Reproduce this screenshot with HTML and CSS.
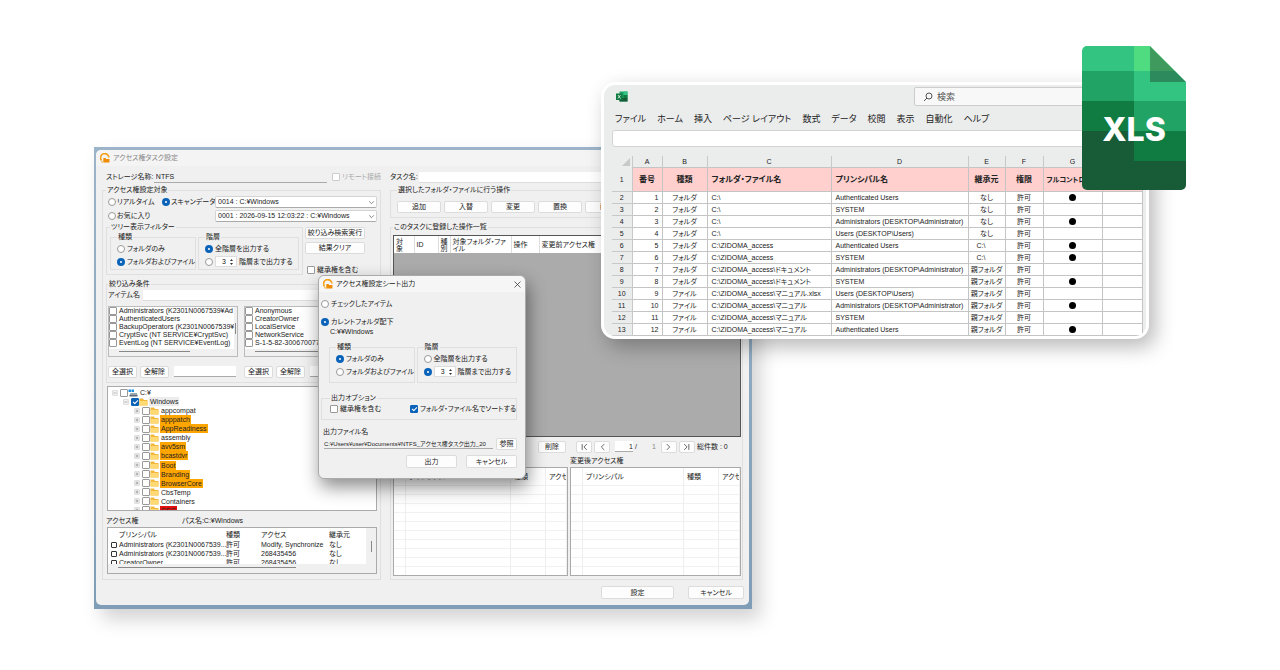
FILE: index.html
```html
<!DOCTYPE html>
<html lang="ja">
<head>
<meta charset="utf-8">
<title>アクセス権タスク設定</title>
<link rel="stylesheet" href="styles.css">
</head>
<body>
<svg class="defs" aria-hidden="true">
  <symbol id="app" viewBox="0 0 18 18"><path d="M2.500 13A7.500 7.500 0 1 1 16 8" fill="none" stroke="#f5a11c" stroke-width="3"/><path d="M6 9h4l1 2h6v6H6z" fill="#f08c00"/><path d="M2 12l4 5H3z" fill="#f5a11c"/></symbol>
  <symbol id="folder" viewBox="0 0 18 16"><path d="M1 1h7l2 3h7v11H1z" fill="#f3b73b"/><path d="M1 6h16v9H1z" fill="#ffda74"/></symbol>
  <symbol id="plus" viewBox="0 0 12 12"><path d="M1.500 1.500h9v9h-9z" fill="#fff" stroke="#aaa"/><path d="M3 6h6M6 3v6" stroke="#555"/></symbol>
  <symbol id="minus" viewBox="0 0 12 12"><path d="M1.500 1.500h9v9h-9z" fill="#fff" stroke="#aaa"/><path d="M3 6h6" stroke="#555"/></symbol>
  <symbol id="drive" viewBox="0 0 20 16"><path d="M1 1h5v5H1zM7 1h5v5H7z" fill="#1c8fe0"/><path d="M5 8h13l1 5H3z" fill="#9aa7b1"/><path d="M3 12h16v3H3z" fill="#5d6b76"/></symbol>
  <symbol id="chev" viewBox="0 0 12 12"><path d="M2 4l4 4 4-4" fill="none" stroke="#777" stroke-width="1.500"/></symbol>
  <symbol id="spin" viewBox="0 0 10 16"><path d="M5 2l3 4H2zM5 14l3-4H2z" fill="#333"/></symbol>
</svg>
<main class="stage">

<section class="frame">
<div class="window">
  <header class="titlebar"><svg class="appicon"><use href="#app"/></svg><span>アクセス権タスク設定</span></header>
  <div class="columns">
    <div class="left">
      <div class="toprow">
        <label class="storage" for="storage">ストレージ名称:</label>
        <input class="line storage-input" id="storage" value="NTFS">
        <label class="check dim"><input type="checkbox" disabled>リモート接続</label>
      </div>
      <fieldset class="target">
        <legend>アクセス権設定対象</legend>
        <div class="sources">
          <label class="check"><input type="radio" name="src">リアルタイム</label>
          <label class="check"><input type="radio" name="src" checked>スキャンデータ</label>
          <span class="select"><select aria-label="スキャンデータ"><option>0014 : C:¥Windows</option></select><svg><use href="#chev"/></svg></span>
          <label class="check fav"><input type="radio" name="src">お気に入り</label>
          <span class="select"><select aria-label="お気に入り"><option>0001 : 2026-09-15 12:03:22 : C:¥Windows</option></select><svg><use href="#chev"/></svg></span>
        </div>
        <div class="filter">
          <fieldset class="treefilter">
            <legend>ツリー表示フィルター</legend>
            <div class="pair">
              <fieldset class="kind"><legend>種類</legend>
                <label class="check"><input type="radio" name="k1">フォルダのみ</label>
                <label class="check"><input type="radio" name="k1" checked>フォルダおよびファイル</label>
              </fieldset>
              <fieldset class="depth"><legend>階層</legend>
                <label class="check"><input type="radio" name="d1" checked>全階層を出力する</label>
                <div class="check"><input type="radio" name="d1" aria-label="階層まで出力する"><span class="spin"><input type="text" value="3" aria-label="階層数"><svg><use href="#spin"/></svg></span><span>階層まで出力する</span></div>
              </fieldset>
            </div>
          </fieldset>
          <div class="actions">
            <button>絞り込み検索実行</button>
            <button>結果クリア</button>
            <label class="check"><input type="checkbox">継承権を含む</label>
          </div>
        </div>
        <fieldset class="conditions">
          <legend>絞り込み条件</legend>
          <div class="item"><label for="item">アイテム名</label><input class="line" id="item"></div>
          <div class="lists">
            <div class="list">
              <div class="rows">
                <label class="check"><input type="checkbox">Administrators (K2301N0067539¥Ad</label>
                <label class="check"><input type="checkbox">AuthenticatedUsers</label>
                <label class="check"><input type="checkbox">BackupOperators (K2301N0067539¥B</label>
                <label class="check"><input type="checkbox">CryptSvc (NT SERVICE¥CryptSvc)</label>
                <label class="check"><input type="checkbox">EventLog (NT SERVICE¥EventLog)</label>
              </div>
              <i class="vbar"></i><i class="hbar"></i>
            </div>
            <div class="list">
              <div class="rows">
                <label class="check"><input type="checkbox">Anonymous</label>
                <label class="check"><input type="checkbox">CreatorOwner</label>
                <label class="check"><input type="checkbox">LocalService</label>
                <label class="check"><input type="checkbox">NetworkService</label>
                <label class="check"><input type="checkbox">S-1-5-82-3006700770</label>
              </div>
              <i class="vbar"></i><i class="hbar"></i>
            </div>
            <div class="picks"><button>全選択</button><button>全解除</button><input class="line" aria-label="検索"></div>
            <div class="picks"><button>全選択</button><button>全解除</button><input class="line" aria-label="検索"></div>
          </div>
        </fieldset>
        <div class="tree">
          <div class="node"><svg class="ex"><use href="#minus"/></svg><input type="checkbox" aria-label="C:¥"><svg class="drive"><use href="#drive"/></svg><span>C:¥</span></div>
          <div class="node l1"><svg class="ex"><use href="#minus"/></svg><input type="checkbox" checked aria-label="Windows"><svg class="fo"><use href="#folder"/></svg><span class="sel">Windows</span></div>
          <div class="node l2"><svg class="ex"><use href="#plus"/></svg><input type="checkbox" aria-label="appcompat"><svg class="fo"><use href="#folder"/></svg><span>appcompat</span></div>
          <div class="node l2"><svg class="ex"><use href="#plus"/></svg><input type="checkbox" aria-label="apppatch"><svg class="fo"><use href="#folder"/></svg><span class="hot">apppatch</span></div>
          <div class="node l2"><svg class="ex"><use href="#plus"/></svg><input type="checkbox" aria-label="AppReadiness"><svg class="fo"><use href="#folder"/></svg><span class="hot">AppReadiness</span></div>
          <div class="node l2"><svg class="ex"><use href="#plus"/></svg><input type="checkbox" aria-label="assembly"><svg class="fo"><use href="#folder"/></svg><span>assembly</span></div>
          <div class="node l2"><svg class="ex"><use href="#plus"/></svg><input type="checkbox" aria-label="avv5sm"><svg class="fo"><use href="#folder"/></svg><span class="hot">avv5sm</span></div>
          <div class="node l2"><svg class="ex"><use href="#plus"/></svg><input type="checkbox" aria-label="bcastdvr"><svg class="fo"><use href="#folder"/></svg><span class="hot">bcastdvr</span></div>
          <div class="node l2"><svg class="ex"><use href="#plus"/></svg><input type="checkbox" aria-label="Boot"><svg class="fo"><use href="#folder"/></svg><span class="hot">Boot</span></div>
          <div class="node l2"><svg class="ex"><use href="#plus"/></svg><input type="checkbox" aria-label="Branding"><svg class="fo"><use href="#folder"/></svg><span class="hot">Branding</span></div>
          <div class="node l2"><svg class="ex"><use href="#plus"/></svg><input type="checkbox" aria-label="BrowserCore"><svg class="fo"><use href="#folder"/></svg><span class="hot">BrowserCore</span></div>
          <div class="node l2"><svg class="ex"><use href="#plus"/></svg><input type="checkbox" aria-label="CbsTemp"><svg class="fo"><use href="#folder"/></svg><span>CbsTemp</span></div>
          <div class="node l2"><svg class="ex"><use href="#plus"/></svg><input type="checkbox" aria-label="Containers"><svg class="fo"><use href="#folder"/></svg><span>Containers</span></div>
          <div class="node l2 cut"><svg class="ex"><use href="#plus"/></svg><input type="checkbox" aria-label="CSC"><svg class="fo"><use href="#folder"/></svg><span class="red">CSC</span></div>
        </div>
        <div class="path"><span>アクセス権</span><span>パス名:C:¥Windows</span></div>
        <div class="acl">
          <div class="aclrows">
          <table>
            <colgroup><col class="a1"><col class="a2"><col class="a3"><col class="a4"><col></colgroup>
            <thead><tr><th></th><th>プリンシパル</th><th>種類</th><th>アクセス</th><th>継承元</th></tr></thead>
            <tbody>
            <tr><td><input type="checkbox" aria-label="行1"></td><td>Administrators (K2301N0067539...</td><td>許可</td><td>Modify, Synchronize</td><td>なし</td></tr>
            <tr><td><input type="checkbox" aria-label="行2"></td><td>Administrators (K2301N0067539...</td><td>許可</td><td>268435456</td><td>なし</td></tr>
            <tr><td><input type="checkbox" aria-label="行3"></td><td>CreatorOwner</td><td>許可</td><td>268435456</td><td>なし</td></tr>
            </tbody>
          </table>
          </div>
          <i class="vbar"></i><i class="hbar"></i>
        </div>
      </fieldset>
    </div>
    <div class="right">
      <div class="toprow"><label class="task" for="task">タスク名:</label><input class="line" id="task"></div>
      <fieldset class="ops">
        <legend>選択したフォルダ・ファイルに行う操作</legend>
        <div class="opbuttons"><button>追加</button><button>入替</button><button>変更</button><button>置換</button><button>削除</button></div>
      </fieldset>
      <fieldset class="registered">
        <legend>このタスクに登録した操作一覧</legend>
        <div class="taskgrid">
          <table>
            <colgroup><col class="t1"><col class="t2"><col class="t3"><col class="t4"><col class="t5"><col></colgroup>
            <thead><tr><th>対<br>象</th><th>ID</th><th>種<br>別</th><th>対象フォルダ・ファイル</th><th>操作</th><th>変更前アクセス権</th></tr></thead>
          </table>
        </div>
        <div class="pager">
          <button class="del">削除</button>
          <button aria-label="最初"><svg viewBox="0 0 12 12"><path d="M2 1v10M10 1L5 6l5 5"/></svg></button>
          <button aria-label="前"><svg viewBox="0 0 12 12"><path d="M9 1L4 6l5 5"/></svg></button>
          <input class="line" value="1" aria-label="ページ"><span>/</span><span class="total">1</span>
          <button aria-label="次"><svg viewBox="0 0 12 12"><path d="M3 1l5 5-5 5"/></svg></button>
          <button aria-label="最後"><svg viewBox="0 0 12 12"><path d="M2 1l5 5-5 5M10 1v10"/></svg></button>
          <span>総件数 : 0</span>
        </div>
        <div class="compare">
          <span>変更前アクセス権</span><span>変更後アクセス権</span>
          <div class="rights"><div></div><div>プリンシパル</div><div>種類</div><div>アクセス</div></div>
          <div class="rights"><div></div><div>プリンシパル</div><div>種類</div><div>アクセス</div></div>
        </div>
      </fieldset>
    </div>
  </div>
  <footer class="footer"><button class="ok">設定</button><button>キャンセル</button></footer>
</div>
</section>

<section class="dialog" role="dialog" aria-label="アクセス権設定シート出力">
  <header class="titlebar"><svg class="appicon"><use href="#app"/></svg><span>アクセス権設定シート出力</span><button class="close" aria-label="閉じる"><svg viewBox="0 0 14 14"><path d="M1 1l12 12M13 1L1 13"/></svg></button></header>
  <label class="check checked-items"><input type="radio" name="scope">チェックしたアイテム</label>
  <label class="check"><input type="radio" name="scope" checked>カレントフォルダ配下</label>
  <div class="current">C:¥¥Windows</div>
  <div class="pair">
    <fieldset class="kind"><legend>種類</legend>
      <label class="check"><input type="radio" name="k2" checked>フォルダのみ</label>
      <label class="check"><input type="radio" name="k2">フォルダおよびファイル</label>
    </fieldset>
    <fieldset class="depth"><legend>階層</legend>
      <label class="check"><input type="radio" name="d2">全階層を出力する</label>
      <div class="check"><input type="radio" name="d2" checked aria-label="階層まで出力する"><span class="spin"><input type="text" value="3" aria-label="階層数"><svg><use href="#spin"/></svg></span><span>階層まで出力する</span></div>
    </fieldset>
  </div>
  <fieldset class="options"><legend>出力オプション</legend>
    <label class="check"><input type="checkbox">継承権を含む</label>
    <label class="check"><input type="checkbox" checked>フォルダ・ファイル名でソートする</label>
  </fieldset>
  <label class="outlabel" for="out">出力ファイル名</label>
  <div class="outrow"><input class="line" id="out" value="C:¥Users¥user¥Documents¥NTFS_アクセス権タスク出力_20"><button>参照</button></div>
  <div class="dlgbuttons"><button>出力</button><button>キャンセル</button></div>
</section>

<section class="sheet">
  <header class="sheettop">
    <svg class="xl" viewBox="0 0 24 22"><path d="M7 1h16v20H7z" fill="#21a366"/><path d="M15 1h8v7h-8z" fill="#33c481"/><path d="M7 14h16v7H7z" fill="#185c37"/><path d="M15 8h8v6h-8z" fill="#107c41"/><path d="M0 5h13v13H0z" fill="#107c41"/><path d="M4 8l5 7M9 8l-5 7" stroke="#fff" stroke-width="1.500"/></svg>
    <div class="search"><svg viewBox="0 0 20 20"><circle cx="12" cy="8" r="6"/><path d="M8 12l-6 6"/></svg><input aria-label="検索" placeholder="検索"></div>
  </header>
  <nav class="menu"><a href="#">ファイル</a><a href="#">ホーム</a><a href="#">挿入</a><a href="#">ページ レイアウト</a><a href="#">数式</a><a href="#">データ</a><a href="#">校閲</a><a href="#">表示</a><a href="#">自動化</a><a href="#">ヘルプ</a></nav>
  <div class="ribbon"></div>
  <table class="cells">
    <colgroup><col class="n"><col class="ca"><col class="cb"><col class="cc"><col class="cd"><col class="ce"><col class="cf"><col class="cg"><col></colgroup>
    <thead><tr><th><svg class="corner" viewBox="0 0 8 8"><path d="M8 0v8H0z"/></svg></th><th>A</th><th>B</th><th>C</th><th>D</th><th>E</th><th>F</th><th>G</th><th></th></tr></thead>
    <tbody>
      <tr class="head"><th>1</th><td>番号</td><td>種類</td><td>フォルダ・ファイル名</td><td>プリンシパル名</td><td>継承元</td><td>権限</td><td>フルコントロール</td><td></td></tr>
      <tr><th>2</th><td>1</td><td>フォルダ</td><td>C:\</td><td>Authenticated Users</td><td>なし</td><td>許可</td><td><i class="dot"></i></td><td></td></tr>
      <tr><th>3</th><td>2</td><td>フォルダ</td><td>C:\</td><td>SYSTEM</td><td>なし</td><td>許可</td><td></td><td></td></tr>
      <tr><th>4</th><td>3</td><td>フォルダ</td><td>C:\</td><td>Administrators (DESKTOP\Administrator)</td><td>なし</td><td>許可</td><td><i class="dot"></i></td><td></td></tr>
      <tr><th>5</th><td>4</td><td>フォルダ</td><td>C:\</td><td>Users (DESKTOP\Users)</td><td>なし</td><td>許可</td><td></td><td></td></tr>
      <tr><th>6</th><td>5</td><td>フォルダ</td><td>C:\ZIDOMA_access</td><td>Authenticated Users</td><td class="drv">C:\</td><td>許可</td><td><i class="dot"></i></td><td></td></tr>
      <tr><th>7</th><td>6</td><td>フォルダ</td><td>C:\ZIDOMA_access</td><td>SYSTEM</td><td class="drv">C:\</td><td>許可</td><td><i class="dot"></i></td><td></td></tr>
      <tr><th>8</th><td>7</td><td>フォルダ</td><td>C:\ZIDOMA_access\ドキュメント</td><td>Administrators (DESKTOP\Administrator)</td><td>親フォルダ</td><td>許可</td><td></td><td></td></tr>
      <tr><th>9</th><td>8</td><td>フォルダ</td><td>C:\ZIDOMA_access\ドキュメント</td><td>SYSTEM</td><td>親フォルダ</td><td>許可</td><td><i class="dot"></i></td><td></td></tr>
      <tr><th>10</th><td>9</td><td>ファイル</td><td>C:\ZIDOMA_access\マニュアル.xlsx</td><td>Users (DESKTOP\Users)</td><td>親フォルダ</td><td>許可</td><td></td><td></td></tr>
      <tr><th>11</th><td>10</td><td>ファイル</td><td>C:\ZIDOMA_access\マニュアル</td><td>Administrators (DESKTOP\Administrator)</td><td>親フォルダ</td><td>許可</td><td><i class="dot"></i></td><td></td></tr>
      <tr><th>12</th><td>11</td><td>ファイル</td><td>C:\ZIDOMA_access\マニュアル</td><td>SYSTEM</td><td>親フォルダ</td><td>許可</td><td></td><td></td></tr>
      <tr><th>13</th><td>12</td><td>ファイル</td><td>C:\ZIDOMA_access\マニュアル</td><td>Authenticated Users</td><td>親フォルダ</td><td>許可</td><td><i class="dot"></i></td><td></td></tr>
    </tbody>
  </table>
</section>

<div class="badge">
  <svg viewBox="0 0 104 144" aria-hidden="true">
    <clipPath id="page"><path d="M5 0H68L104 36V139a5 5 0 0 1-5 5H5a5 5 0 0 1-5-5V5a5 5 0 0 1 5-5z"/></clipPath>
    <g clip-path="url(#page)">
      <path d="M0 0h52v25H0z" fill="#33c481"/><path d="M0 25h52v30H0z" fill="#21a366"/><path d="M0 55h52v30H0z" fill="#107c41"/><path d="M0 85h52v59H0z" fill="#185c37"/>
      <path d="M52 0h52v25H52z" fill="#4fdc80"/><path d="M52 25h52v30H52z" fill="#33c481"/><path d="M52 55h52v30H52z" fill="#21a366"/><path d="M52 85h52v30H52z" fill="#107c41"/><path d="M52 115h52v29H52z" fill="#185c37"/>
      <path d="M68 0L93 25H68z" fill="#3f9a5e"/><path d="M68 25h25l11 11H68z" fill="#2d8a5c"/>
    </g>
  </svg>
  <strong>XLS</strong>
</div>
</main>
</body>
</html>
```
FILE: styles.css
```css
* { box-sizing: border-box; }
body { margin: 0; background: #fff; color: #222; font: 7px/10px "Liberation Sans", "Noto Sans CJK JP", sans-serif; font-feature-settings: "palt"; }
.defs { position: absolute; width: 0; height: 0; }
.stage { position: relative; min-height: 670px; overflow: hidden; }
svg { display: block; flex: none; }
button, input, select { font: inherit; font-feature-settings: inherit; color: inherit; margin: 0; padding: 0; min-width: 0; }
button { background: #fdfdfd; border: 1px solid #dcdcdc; border-radius: 2px; height: 12px; line-height: 10px; white-space: nowrap; }
fieldset { margin: 0; padding: 0; border: 1px solid #dfdfdf; min-width: 0; }
legend { padding: 0 1px; line-height: 10px; white-space: nowrap; }
table { border-collapse: collapse; table-layout: fixed; width: 100%; }
th, td { padding: 0; font-weight: normal; text-align: left; overflow: hidden; white-space: nowrap; }

input[type=radio], input[type=checkbox] { appearance: none; flex: none; width: 8px; height: 8px; border: 1px solid #999; background: #fff; }
input[type=radio] { border-radius: 50%; }
input[type=checkbox] { border-radius: 1px; }
input[type=radio]:checked { border: 3px solid #0a63b8; }
input[type=checkbox]:checked { border-color: #0a63b8; background: #0a63b8; }
input[type=checkbox]:checked::after { content: ""; display: block; width: 4px; height: 2px; margin: 1px; border: solid #fff; border-width: 0 0 1px 1px; transform: rotate(-45deg); }
.check { display: flex; align-items: center; gap: 2px; white-space: nowrap; }
.dim { color: #aaa; }
.dim input[type=checkbox] { border-color: #ccc; }
.line { border: 0; border-bottom: 1px solid #aaa; background: #fff; height: 11px; }
.spin { display: flex; align-items: center; justify-content: space-between; width: 22px; height: 11px; padding-right: 2px; border: 1px solid #ddd; background: #fff; }
.spin input { width: 10px; height: 9px; border: 0; background: none; text-align: right; }
.spin svg { width: 5px; height: 8px; }
.appicon { width: 10px; height: 10px; }
.titlebar { display: flex; align-items: center; gap: 3px; height: 16px; padding-left: 4px; }

/* main window */
.frame { position: absolute; left: 94px; top: 147px; width: 658px; padding: 3px 3px 4px 2px; background: linear-gradient(#9bb4c9, #7f9db6); box-shadow: 8px 10px 18px rgba(0, 0, 0, .18); }
.window { background: #f0f0f0; border-radius: 5px; padding-bottom: 6px; }
.window > .titlebar { color: #888; background: #f4f4f4; border-radius: 5px 5px 0 0; }
.columns { display: grid; grid-template-columns: 279px 1fr; gap: 9px; padding: 5px 6px 0; }
.left, .right { min-width: 0; display: flex; flex-direction: column; }
.toprow { display: flex; align-items: center; height: 12px; margin-bottom: 2px; }
.storage { width: 52px; padding-left: 4px; }
.storage-input { width: 174px; margin-right: 5px; background: #f0f0f0; padding-left: 2px; }
.task { width: 29px; }
.toprow .task + .line { flex: 1; border-color: #ddd; }
.target { flex: 1; padding: 0 3px 3px; }
.sources { display: grid; grid-template-columns: 54px 53px 1fr; row-gap: 2px; padding: 1px 0 0 2px; align-items: center; }
.sources .check { gap: 1px; }
.fav { grid-column: span 2; }
.select { display: grid; align-items: center; }
.select > * { grid-area: 1 / 1; }
.select select { appearance: none; width: 100%; height: 12px; line-height: 10px; padding: 0 2px; border: 1px solid #d4d4d4; border-bottom-color: #aaa; border-radius: 2px; background: #fff; }
.select svg { width: 7px; height: 7px; justify-self: end; margin-right: 2px; pointer-events: none; }
.filter { display: flex; gap: 2px; }
.treefilter { width: 197px; padding: 0 3px 4px; }
.pair { display: flex; gap: 2px; }
.kind { width: 86px; }
.depth { width: 101px; }
.kind, .depth { padding: 0 0 1px 6px; }
.kind .check, .depth .check { height: 13px; }
.actions { display: flex; flex-direction: column; gap: 3px; padding-top: 5px; width: 60px; }
.actions .check { margin: 8px 0 0 2px; }
.conditions { padding: 0 3px 4px 1px; margin-top: 4px; }
.item { display: flex; height: 12px; align-items: center; margin-bottom: 5px; }
.item label { width: 35px; }
.item .line { flex: 1; border-color: #ddd; }
.lists { display: grid; grid-template-columns: 130px 130px; gap: 9px 6px; }
.list { display: grid; grid-template-columns: 1fr 3px; grid-template-rows: 42px 7px; border: 1px solid #bbb; background: #f0f0f0; }
.rows { background: #fff; overflow: hidden; }
.rows .check { height: 8px; line-height: 8px; }
.vbar { width: 1px; height: 11px; background: #888; align-self: center; justify-self: center; }
.hbar { width: 71px; height: 1px; margin: 2px 0 0 10px; background: #888; }
.picks { display: flex; gap: 3px; padding: 0 2px 0 0; }
.picks button { width: 29px; }
.picks .line { width: 0; flex: 1; margin-left: 2px; }
.tree { display: flex; flex-direction: column; justify-content: space-between; height: 125px; margin: 3px 0 5px 1px; padding: 1px 4px 0; border: 1px solid #aaa; background: #fff; overflow: hidden; }
.node { display: flex; align-items: center; height: 9px; line-height: 9px; }
.node .ex { width: 6px; height: 6px; margin-right: 2px; }
.node .fo { width: 9px; height: 8px; margin-right: 1px; }
.node .drive { width: 10px; height: 8px; margin-right: 1px; }
.node span { padding: 0 1px; }
.l1 { padding-left: 11px; }
.l2 { padding-left: 22px; }
.cut { margin-bottom: -5px; }
.hot { background: #ffa500; }
.red { background: #e01010; }
.sel { background: #ececec; }
.path { display: grid; grid-template-columns: 76px 1fr; margin-bottom: 1px; }
.acl { display: grid; grid-template-columns: 1fr 10px; grid-template-rows: 36px 9px; margin-left: 1px; border: 1px solid #aaa; background: #f0f0f0; }
.aclrows { overflow: hidden; background: #fff; }
.acl tr { height: 9px; line-height: 9px; }
.acl thead tr { height: 12px; }
.acl td input[type=checkbox] { display: block; width: 6px; height: 6px; margin-left: 3px; border-color: #333; }
.acl .hbar { width: 178px; margin-top: 3px; }
.a1 { width: 11px; } .a2 { width: 107px; } .a3 { width: 35px; } .a4 { width: 68px; }
.ops { padding: 0 0 4px 6px; }
.opbuttons { display: flex; gap: 3px; overflow: hidden; padding-top: 6px; }
.opbuttons button { flex: 0 0 44px; }
.registered { flex: 1; display: flex; flex-direction: column; margin-top: 4px; padding: 0 1px 3px 2px; }
.taskgrid { height: 202px; margin-top: 3px; border: 1px solid #555; background: #ababab; }
.taskgrid tr { height: 17px; background: #fff; line-height: 7px; }
.taskgrid th { border-right: 1px solid #ddd; padding-left: 2px; white-space: normal; }
.t1 { width: 20px; } .t2 { width: 24px; } .t3 { width: 12px; } .t4 { width: 61px; } .t5 { width: 28px; }
.pager { display: flex; align-items: center; gap: 2px; height: 19px; padding-left: 145px; }
.pager button { width: 16px; display: grid; place-items: center; }
.pager .del { width: 28px; margin-right: 8px; }
.pager .line { width: 18px; text-align: right; margin-left: 3px; }
.pager .total { width: 17px; text-align: right; color: #888; margin-right: 3px; }
.pager svg { width: 7px; height: 8px; fill: none; stroke: #555; stroke-width: 1.5; }
.compare { display: grid; grid-template-columns: 175px 1fr; grid-template-rows: 10px 109px; gap: 1px 2px; }
.rights { display: grid; grid-template-columns: 12px 1fr 35px 21px; border: 1px solid #aaa; overflow: hidden; background: repeating-linear-gradient(#fff 0 8px, #f1f1f1 8px 9px); }
.rights div { padding: 4px 0 0 3px; border-right: 1px solid #eee; overflow: hidden; white-space: nowrap; background: linear-gradient(#fff 0 17px, transparent 17px); }
.footer { display: flex; justify-content: flex-end; gap: 14px; margin-top: 6px; padding-right: 5px; }
.footer button { width: 56px; height: 13px; }
.footer .ok { width: 73px; }

/* output dialog */
.dialog { position: absolute; left: 318px; top: 275px; width: 208px; padding: 0 8px 10px 2px; border: 1px solid #aaa; border-radius: 6px; background: #f0f0f0; box-shadow: 2px 8px 18px rgba(0, 0, 0, .45); }
.dialog .titlebar { margin: 0 -8px 0 -2px; border-radius: 6px 6px 0 0; background: #f6f6f6; }
.close { margin-left: auto; width: 16px; border: 0; background: none; display: grid; place-items: center; }
.close svg { width: 7px; height: 7px; fill: none; stroke: #333; stroke-width: 1.5; }
.dialog > .check { height: 10px; }
.dialog > .checked-items { margin: 7px 0 8px; }
.current { padding-left: 9px; }
.dialog .pair { padding-left: 8px; margin-top: 5px; }
.dialog .kind, .dialog .depth { padding-bottom: 4px; }
.options { display: grid; grid-template-columns: 80px 1fr; padding: 1px 0 5px 8px; margin-top: 10px; }
.outlabel { display: block; margin: 7px 0 1px 2px; }
.outrow { display: flex; gap: 3px; padding-left: 3px; }
.outrow .line { flex: 1; background: none; font-size: 6px; }
.outrow button { width: 21px; }
.dlgbuttons { display: flex; justify-content: flex-end; gap: 9px; margin-top: 5px; }
.dlgbuttons button { width: 51px; height: 13px; }

/* spreadsheet window */
.sheet { position: absolute; left: 601px; top: 82px; width: 548px; border: 3px solid #fff; border-radius: 14px; background: #ebecec; box-shadow: 6px 8px 20px rgba(0, 0, 0, .28); overflow: hidden; }
.sheettop { display: flex; justify-content: space-between; align-items: center; height: 23px; padding-left: 12px; }
.xl { width: 12px; height: 11px; }
.search { display: flex; align-items: center; gap: 4px; width: 232px; height: 19px; padding-left: 8px; border: 1px solid #ccc; border-radius: 2px; background: #f8f8f8; }
.search svg { width: 10px; height: 10px; fill: none; stroke: #555; stroke-width: 2; }
.search input { border: 0; background: none; font-size: 9px; flex: 1; }
.search input::placeholder { color: #555; opacity: 1; }
.menu { display: flex; gap: 11px; height: 22px; padding-left: 11px; font-size: 9px; line-height: 22px; white-space: nowrap; }
.menu a { color: #222; text-decoration: none; }
.ribbon { height: 17px; margin-left: 8px; border: 1px solid #d4d4d4; border-radius: 3px 0 0 3px; background: #fff; }
.cells { margin: 9px 0 0 8px; width: calc(100% - 11px); line-height: 11px; }
.n { width: 20px; } .ca { width: 30px; } .cb { width: 45px; } .cc { width: 124px; } .cd { width: 137px; } .ce { width: 37px; } .cf { width: 38px; } .cg { width: 59px; }
.cells th { text-align: center; background: #ebecec; border-right: 1px solid #c8c8c8; border-bottom: 1px solid #c8c8c8; }
.cells thead th { border-bottom: 0; }
.cells td { height: 12px; background: #fff; border: 1px solid #c4c4c4; text-align: center; }
.cells td:nth-child(2) { text-align: right; padding-right: 3px; }
.cells td:nth-child(4), .cells td:nth-child(5) { text-align: left; padding-left: 4px; }
.cells td.drv { text-align: left; padding-left: 8px; }
.cells .head td { height: 24px; background: #ffd0ce; font-weight: bold; font-size: 8px; }
.cells .head td:nth-child(2) { text-align: center; padding: 0; }
.cells .head td:nth-child(8) { font-size: 7px; text-align: left; padding-left: 3px; }
.corner { width: 8px; height: 8px; margin-left: 10px; fill: #c8c8c8; }
.dot { display: block; width: 7px; height: 7px; margin: 0 auto; border-radius: 50%; background: #000; }

/* file badge */
.badge { position: absolute; left: 1082px; top: 46px; width: 104px; display: grid; place-items: center; }
.badge > * { grid-area: 1 / 1; }
.badge svg { width: 100%; }
.badge strong { margin-top: 24px; color: #fff; font: 800 32px/40px Inter, sans-serif; }
```
